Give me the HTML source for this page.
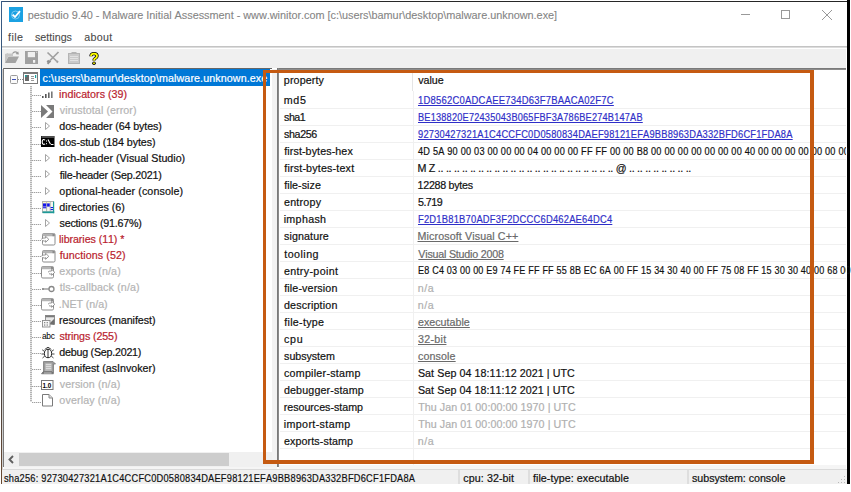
<!DOCTYPE html>
<html><head><meta charset="utf-8">
<style>
html,body{margin:0;padding:0;}
body{width:851px;height:492px;position:relative;overflow:hidden;background:#fff;font-family:"Liberation Sans",sans-serif;}
.a{position:absolute;}
.t{position:absolute;white-space:pre;line-height:normal;font-kerning:none;-webkit-text-stroke:0.2px currentColor;font-family:"Liberation Sans",sans-serif;}
svg{position:absolute;overflow:visible;}
</style></head><body>
<!-- window frame -->
<div class="a" style="left:1px;top:1px;width:847px;height:1px;background:linear-gradient(90deg,#34557e 0px,#3a4656 20px,#2a2a2a 60px,#262626 100%)"></div>
<div class="a" style="left:1px;top:1px;width:1px;height:483px;background:linear-gradient(180deg,#3a5d88 0%,#34495f 30%,#3a3f48 70%,#6a4a30 100%)"></div>
<div class="a" style="left:847px;top:0px;width:3px;height:484px;background:#000"></div>

<!-- title icon -->
<svg style="left:9px;top:7px" width="14" height="15" viewBox="0 0 14 15">
<rect x="0" y="0" width="14" height="15" fill="#1ba1e2"/>
<circle cx="6.5" cy="8" r="4" fill="none" stroke="#8fd3f5" stroke-width="0.8"/>
<path d="M3.6 7.6 L6 10 L11 4.2" fill="none" stroke="#fff" stroke-width="1.8"/>
</svg>
<!-- window controls -->
<div class="a" style="left:741px;top:14px;width:9px;height:1px;background:#999"></div>
<div class="a" style="left:781px;top:10px;width:7px;height:7px;border:1px solid #999"></div>
<svg style="left:822px;top:10px" width="10" height="10" viewBox="0 0 10 10"><path d="M0 0 L10 10 M10 0 L0 10" stroke="#999" stroke-width="1"/></svg>

<!-- menu separator + toolbar -->
<div class="a" style="left:2px;top:46px;width:845px;height:1px;background:#c4c4c4"></div>
<div class="a" style="left:2px;top:47px;width:845px;height:1px;background:#dcdcdc"></div>
<div class="a" style="left:2px;top:49px;width:844px;height:19px;background:#f0f0f0"></div>

<!-- toolbar icons -->
<svg style="left:5px;top:51px" width="14" height="12" viewBox="0 0 14 12">
<path d="M0 3 L3 2 L3 2.5 L8 2.5 L8 5 L3.5 5 L0 12 Z" fill="#c6c6c6"/>
<path d="M0 12 L3.5 5.5 L14 5.5 L10.5 12 Z" fill="#a3a3a3"/>
<path d="M7.5 2.5 Q10 -0.5 12.5 2" fill="none" stroke="#9a9a9a" stroke-width="1.1"/>
<path d="M11 2.8 L13.5 3.2 L13 0.8 Z" fill="#9a9a9a" stroke="#9a9a9a" stroke-width="0.6"/>
</svg>
<svg style="left:25px;top:51px" width="13" height="13" viewBox="0 0 13 13">
<rect x="0" y="0" width="13" height="13" fill="#a0a0a0"/>
<rect x="2.8" y="1" width="7.2" height="5.2" fill="#efefef"/>
<rect x="8" y="9" width="2.2" height="2.8" fill="#f4f4f4"/>
<rect x="11.2" y="0.8" width="1" height="1" fill="#e0e0e0"/>
</svg>
<svg style="left:46px;top:51px" width="14" height="14" viewBox="0 0 14 14">
<path d="M1.5 1.5 L10.5 10 M12.5 1 L4 9.5" stroke="#a0a0a0" stroke-width="1.7"/>
<path d="M1.5 12.8 L4.5 9.8 M1.2 11 L3 9.5" stroke="#909090" stroke-width="2"/>
<path d="M10.5 10 L12 11.5" stroke="#a0a0a0" stroke-width="2"/>
</svg>
<svg style="left:68px;top:52px" width="12" height="12" viewBox="0 0 12 12">
<rect x="0.5" y="1.5" width="11" height="10" fill="#cacaca" stroke="#b4b4b4" stroke-width="1"/>
<rect x="3.5" y="0" width="5" height="2" fill="#b4b4b4"/>
<path d="M2 4.5 H10 M2 6.5 H10 M2 8.5 H10" stroke="#e4e4e4" stroke-width="0.9"/>
</svg>
<svg style="left:89px;top:52px" width="10" height="13" viewBox="0 0 10 13">
<path d="M2 4.2 Q2 1.6 5 1.6 Q8 1.6 8 4 Q8 5.6 6 6.6 Q5 7.2 5 8.6" fill="none" stroke="#000" stroke-width="3.4"/>
<circle cx="5" cy="11.2" r="1.8" fill="#000"/>
<path d="M2 4.2 Q2 1.6 5 1.6 Q8 1.6 8 4 Q8 5.6 6 6.6 Q5 7.2 5 8.6" fill="none" stroke="#ffff00" stroke-width="1.8"/>
<circle cx="5" cy="11.2" r="0.9" fill="#ffff00"/>
</svg>

<!-- panel top lines -->
<div class="a" style="left:3px;top:68px;width:269px;height:1px;background:#666"></div>
<div class="a" style="left:277px;top:68px;width:569px;height:1px;background:#7a7a7a"></div>
<div class="a" style="left:277px;top:69px;width:569px;height:1px;background:#8c8c8c"></div>
<!-- tree panel left border -->
<div class="a" style="left:2px;top:69px;width:1px;height:415px;background:#cfcfcf"></div>
<div class="a" style="left:3px;top:68px;width:1px;height:399px;background:#7a7a7a"></div>
<!-- splitter -->
<div class="a" style="left:272px;top:69px;width:5px;height:398px;background:#f2f2f2"></div>
<!-- list left border -->
<div class="a" style="left:277px;top:68px;width:1px;height:399px;background:#7a7a7a"></div>
<div class="a" style="left:278px;top:68px;width:1px;height:399px;background:#8a8a8a"></div>

<!-- tree selection -->
<div class="a" style="left:40px;top:69px;width:230px;height:17px;background:#0078d7"></div>

<div class="a" style="left:10px;top:75px;width:6px;height:7px;border:1px solid #9a9a9a;border-radius:1.5px;background:#fafafa"></div>
<div class="a" style="left:12px;top:79px;width:4px;height:1px;background:#3c4fb8"></div>
<div class="a" style="left:18px;top:79px;width:5px;height:1px;background-image:linear-gradient(90deg,#8a8a8a 50%,transparent 50%);background-size:2px 1px"></div>
<svg style="left:23px;top:72px" width="15" height="12" viewBox="0 0 15 12">
<rect x="0.5" y="0.5" width="14" height="11" fill="#fff" stroke="#7a7a7a"/>
<rect x="0.5" y="0.5" width="14" height="1.5" fill="#7a7a7a"/>
<rect x="2" y="3" width="4" height="6" fill="#6a6a6a"/><rect x="2" y="3" width="1.5" height="2" fill="#1aa0a0"/>
<path d="M8 4.5 H11 M8 6.5 H11 M8 8.5 H11" stroke="#9a9a9a" stroke-width="1"/>
<rect x="12" y="3" width="1.2" height="3" fill="#1aa0a0"/>
</svg>
<div class="a" style="left:30px;top:86px;width:2px;height:316px;background-image:linear-gradient(180deg,#b4b4b4 50%,#e4e4e4 50%);background-size:2px 2px"></div>
<div class="a" style="left:32px;top:95px;width:9px;height:1px;background-image:linear-gradient(90deg,#a0a0a0 50%,#e0e0e0 50%);background-size:2px 1px"></div>
<div class="a" style="left:32px;top:111px;width:9px;height:1px;background-image:linear-gradient(90deg,#a0a0a0 50%,#e0e0e0 50%);background-size:2px 1px"></div>
<div class="a" style="left:32px;top:127px;width:9px;height:1px;background-image:linear-gradient(90deg,#a0a0a0 50%,#e0e0e0 50%);background-size:2px 1px"></div>
<div class="a" style="left:32px;top:144px;width:9px;height:1px;background-image:linear-gradient(90deg,#a0a0a0 50%,#e0e0e0 50%);background-size:2px 1px"></div>
<div class="a" style="left:32px;top:160px;width:9px;height:1px;background-image:linear-gradient(90deg,#a0a0a0 50%,#e0e0e0 50%);background-size:2px 1px"></div>
<div class="a" style="left:32px;top:176px;width:9px;height:1px;background-image:linear-gradient(90deg,#a0a0a0 50%,#e0e0e0 50%);background-size:2px 1px"></div>
<div class="a" style="left:32px;top:192px;width:9px;height:1px;background-image:linear-gradient(90deg,#a0a0a0 50%,#e0e0e0 50%);background-size:2px 1px"></div>
<div class="a" style="left:32px;top:208px;width:9px;height:1px;background-image:linear-gradient(90deg,#a0a0a0 50%,#e0e0e0 50%);background-size:2px 1px"></div>
<div class="a" style="left:32px;top:224px;width:9px;height:1px;background-image:linear-gradient(90deg,#a0a0a0 50%,#e0e0e0 50%);background-size:2px 1px"></div>
<div class="a" style="left:32px;top:240px;width:9px;height:1px;background-image:linear-gradient(90deg,#a0a0a0 50%,#e0e0e0 50%);background-size:2px 1px"></div>
<div class="a" style="left:32px;top:256px;width:9px;height:1px;background-image:linear-gradient(90deg,#a0a0a0 50%,#e0e0e0 50%);background-size:2px 1px"></div>
<div class="a" style="left:32px;top:273px;width:9px;height:1px;background-image:linear-gradient(90deg,#a0a0a0 50%,#e0e0e0 50%);background-size:2px 1px"></div>
<div class="a" style="left:32px;top:289px;width:9px;height:1px;background-image:linear-gradient(90deg,#a0a0a0 50%,#e0e0e0 50%);background-size:2px 1px"></div>
<div class="a" style="left:32px;top:305px;width:9px;height:1px;background-image:linear-gradient(90deg,#a0a0a0 50%,#e0e0e0 50%);background-size:2px 1px"></div>
<div class="a" style="left:32px;top:321px;width:9px;height:1px;background-image:linear-gradient(90deg,#a0a0a0 50%,#e0e0e0 50%);background-size:2px 1px"></div>
<div class="a" style="left:32px;top:337px;width:9px;height:1px;background-image:linear-gradient(90deg,#a0a0a0 50%,#e0e0e0 50%);background-size:2px 1px"></div>
<div class="a" style="left:32px;top:353px;width:9px;height:1px;background-image:linear-gradient(90deg,#a0a0a0 50%,#e0e0e0 50%);background-size:2px 1px"></div>
<div class="a" style="left:32px;top:369px;width:9px;height:1px;background-image:linear-gradient(90deg,#a0a0a0 50%,#e0e0e0 50%);background-size:2px 1px"></div>
<div class="a" style="left:32px;top:386px;width:9px;height:1px;background-image:linear-gradient(90deg,#a0a0a0 50%,#e0e0e0 50%);background-size:2px 1px"></div>
<div class="a" style="left:32px;top:402px;width:9px;height:1px;background-image:linear-gradient(90deg,#a0a0a0 50%,#e0e0e0 50%);background-size:2px 1px"></div>
<svg style="left:41px;top:85.7px" width="14" height="13" viewBox="0 0 14 13"><rect x="1" y="10" width="1.6" height="2" fill="#555"/><rect x="4" y="8" width="1.6" height="4" fill="#555"/><rect x="7" y="6.5" width="1.6" height="5.5" fill="#666"/><rect x="10" y="5.5" width="1.6" height="6.5" fill="#777"/></svg>
<svg style="left:41px;top:105.3px" width="13" height="13" viewBox="0 0 13 13"><path d="M0 0 L7 6.5 L0 13 Z" fill="#7a7a7a"/><path d="M5 0 H13 V13 H5 L11.5 6.5 Z" fill="#7a7a7a"/></svg>
<svg style="left:41px;top:121.0px" width="12" height="10" viewBox="0 0 12 10"><path d="M4.5 1.5 L8.5 5 L4.5 8.5 Z" fill="#fff" stroke="#9a9a9a" stroke-width="0.9"/></svg>
<svg style="left:41px;top:153.2px" width="12" height="10" viewBox="0 0 12 10"><path d="M4.5 1.5 L8.5 5 L4.5 8.5 Z" fill="#fff" stroke="#9a9a9a" stroke-width="0.9"/></svg>
<svg style="left:41px;top:169.3px" width="12" height="10" viewBox="0 0 12 10"><path d="M4.5 1.5 L8.5 5 L4.5 8.5 Z" fill="#fff" stroke="#9a9a9a" stroke-width="0.9"/></svg>
<svg style="left:41px;top:185.5px" width="12" height="10" viewBox="0 0 12 10"><path d="M4.5 1.5 L8.5 5 L4.5 8.5 Z" fill="#fff" stroke="#9a9a9a" stroke-width="0.9"/></svg>
<svg style="left:41px;top:217.7px" width="12" height="10" viewBox="0 0 12 10"><path d="M4.5 1.5 L8.5 5 L4.5 8.5 Z" fill="#fff" stroke="#9a9a9a" stroke-width="0.9"/></svg>
<svg style="left:41px;top:135.8px" width="14" height="11" viewBox="0 0 14 11"><rect x="0" y="0" width="13.5" height="11" fill="#000"/><rect x="0.5" y="0.5" width="12.5" height="1" fill="#9a9a9a"/><path d="M4 4.2 Q3.2 3.4 2.3 3.6 Q1.2 4 1.2 6 Q1.2 8 2.3 8.3 Q3.3 8.5 4 7.8" fill="none" stroke="#fff" stroke-width="1.1"/><rect x="5" y="4.5" width="1" height="1" fill="#fff"/><rect x="5" y="7.2" width="1" height="1" fill="#fff"/><path d="M7 3.5 L9.5 8.3" stroke="#fff" stroke-width="1.1"/><path d="M10 8.5 H12.5" stroke="#fff" stroke-width="1"/></svg>
<svg style="left:42px;top:201.0px" width="13" height="13" viewBox="0 0 13 13"><rect x="0" y="0" width="12" height="12" fill="#b0b0b0"/><rect x="1" y="1" width="10" height="9.5" fill="#f6f6f0"/><rect x="4.2" y="1" width="0.9" height="9.5" fill="#a8a8a8"/><rect x="7.7" y="1" width="0.9" height="9.5" fill="#a8a8a8"/><rect x="1" y="1" width="3.2" height="1" fill="#fff8c0"/><rect x="5.1" y="1" width="2.6" height="1" fill="#fff8c0"/><rect x="1" y="2.4" width="3.2" height="3.2" fill="#1414e6"/><rect x="5.1" y="2.4" width="2.6" height="3.2" fill="#1414e6"/><rect x="1" y="6.2" width="3.2" height="1.1" fill="#1414e6"/><rect x="8.6" y="6" width="2.4" height="1.1" fill="#1414e6"/><rect x="8.6" y="8" width="2.4" height="1.1" fill="#1414e6"/><rect x="11" y="0.6" width="1.2" height="11.6" fill="#1e9a98"/><rect x="0.6" y="10.4" width="11.6" height="1.8" fill="#1e9a98"/></svg>
<svg style="left:41px;top:233.4px" width="15" height="13" viewBox="0 0 15 13"><rect x="1.5" y="0.5" width="12.5" height="11.5" rx="1.3" fill="#fff" stroke="#8c8c8c"/><rect x="1.5" y="0.5" width="12.5" height="2.8" rx="1" fill="#b4b4b4"/><rect x="11.5" y="1" width="2.2" height="2.2" fill="#8a8a8a"/><path d="M0.3 6.2 Q1.8 4.6 4 5 L4.6 5 L4.6 3.3 L7.8 6.3 L4.6 9.3 L4.6 7.6 Q3.2 8.8 2 7.6" fill="#fff" stroke="#8a8a8a" stroke-width="0.9"/></svg>
<svg style="left:41px;top:249.5px" width="15" height="13" viewBox="0 0 15 13"><rect x="1.5" y="0.5" width="12.5" height="11.5" rx="1.3" fill="#fff" stroke="#8c8c8c"/><rect x="1.5" y="0.5" width="12.5" height="2.8" rx="1" fill="#b4b4b4"/><rect x="11.5" y="1" width="2.2" height="2.2" fill="#8a8a8a"/><path d="M0.3 6.2 Q1.8 4.6 4 5 L4.6 5 L4.6 3.3 L7.8 6.3 L4.6 9.3 L4.6 7.6 Q3.2 8.8 2 7.6" fill="#fff" stroke="#8a8a8a" stroke-width="0.9"/></svg>
<svg style="left:41px;top:265.6px" width="15" height="13" viewBox="0 0 15 13"><rect x="0.5" y="0.5" width="12" height="11.5" rx="1.3" fill="#fff" stroke="#8c8c8c"/><rect x="0.5" y="0.5" width="12" height="2.8" rx="1" fill="#b4b4b4"/><rect x="10" y="1" width="2.2" height="2.2" fill="#8a8a8a"/><path d="M7 6.2 Q8.2 4.8 10 5 L10.6 5 L10.6 3.3 L13.8 6.3 L10.6 9.3 L10.6 7.6 Q9.2 8.8 8 7.6" fill="#fff" stroke="#8a8a8a" stroke-width="0.9"/></svg>
<svg style="left:41px;top:297.9px" width="15" height="13" viewBox="0 0 15 13"><rect x="0.5" y="0.5" width="12" height="11.5" rx="1.3" fill="#fff" stroke="#8c8c8c"/><rect x="0.5" y="0.5" width="12" height="2.8" rx="1" fill="#b4b4b4"/><rect x="10" y="1" width="2.2" height="2.2" fill="#8a8a8a"/><path d="M7 6.2 Q8.2 4.8 10 5 L10.6 5 L10.6 3.3 L13.8 6.3 L10.6 9.3 L10.6 7.6 Q9.2 8.8 8 7.6" fill="#fff" stroke="#8a8a8a" stroke-width="0.9"/></svg>
<svg style="left:41px;top:282.8px" width="14" height="12" viewBox="0 0 14 12"><path d="M1 6 H8" stroke="#888" stroke-width="1.2"/><circle cx="2" cy="6" r="1" fill="#888"/><circle cx="10.5" cy="6" r="2.5" fill="none" stroke="#888" stroke-width="1.3"/></svg>
<svg style="left:41.5px;top:315.0px" width="14" height="13" viewBox="0 0 14 13"><rect x="3.5" y="0.5" width="9" height="8.5" fill="#e8e8e8" stroke="#8a8a8a" stroke-width="0.9"/><rect x="3.5" y="0.5" width="9" height="1.8" fill="#7a7a7a"/><path d="M7 9 L12.5 3.5 L12.5 10 Z" fill="#6e6e6e"/><rect x="0.5" y="5.5" width="7.5" height="6.5" fill="#f8f8f8" stroke="#8a8a8a" stroke-width="0.9"/><rect x="2" y="7" width="1.3" height="1.3" fill="#8a8a8a"/><rect x="4.6" y="7" width="1.3" height="1.3" fill="#8a8a8a"/><rect x="2" y="9.4" width="1.3" height="1.3" fill="#8a8a8a"/><rect x="4.6" y="9.4" width="1.3" height="1.3" fill="#8a8a8a"/></svg>
<svg style="left:41.6px;top:329.3px" width="16" height="12" viewBox="0 0 16 12"><text x="0" y="9.5" font-size="8.4" fill="#000" font-family="Liberation Sans" letter-spacing="-0.3" style="-webkit-text-stroke:0.25px #000">abc</text></svg>
<svg style="left:41px;top:345.3px" width="14" height="14" viewBox="0 0 14 14"><path d="M4 4.5 Q7 0.5 10 4.5" fill="#fff" stroke="#222" stroke-width="1"/><ellipse cx="7" cy="8.5" rx="3.6" ry="4.2" fill="#fff" stroke="#222" stroke-width="1"/><path d="M7 4.5 V12.8" stroke="#222" stroke-width="0.9"/><path d="M3.6 6.5 L1.2 4.8 M10.4 6.5 L12.8 4.8 M3.4 9 L0.5 9 M10.6 9 L13.5 9 M3.8 11 L1.5 13 M10.2 11 L12.5 13" stroke="#333" stroke-width="0.9"/></svg>
<svg style="left:40.5px;top:360.9px" width="15" height="14" viewBox="0 0 15 14"><path d="M2.5 0.5 H12 L14.5 3 H12.5 V12 H2.5 Z" fill="#9a9a9a" stroke="#7a7a7a" stroke-width="0.8"/><rect x="4.2" y="2.2" width="6.6" height="7.8" fill="#b8b8b8"/><path d="M4.8 3.6 H10.2 M4.8 5.6 H10.2 M4.8 7.6 H10.2" stroke="#e4e4e4" stroke-width="0.9"/><path d="M0.5 12.8 L2 10.8 H11 L12.5 12.8 Z" fill="#7a7a7a" stroke="#6a6a6a" stroke-width="0.7"/><rect x="3" y="11.6" width="7.5" height="0.8" fill="#d8d8d8"/></svg>
<svg style="left:40.5px;top:379.6px" width="13" height="11" viewBox="0 0 13 11"><rect x="0.5" y="0.5" width="11.5" height="9" fill="#fff" stroke="#777"/><text x="1.6" y="7.9" font-size="6.3" font-weight="bold" fill="#000" font-family="Liberation Sans" style="-webkit-text-stroke:0">1.0</text></svg>
<svg style="left:42px;top:394.4px" width="12" height="13" viewBox="0 0 12 13"><path d="M0.5 0.5 H7 L10.5 4 V12 H0.5 Z" fill="#fff" stroke="#7a7a7a"/><path d="M7 0.5 V4 H10.5" fill="#ddd" stroke="#8a8a8a"/></svg>

<!-- tree h scrollbar -->
<div class="a" style="left:4px;top:452px;width:268px;height:15px;background:#f0f0f0"></div>
<div class="a" style="left:19px;top:453px;width:210px;height:13px;background:#cdcdcd"></div>
<svg style="left:8px;top:455px" width="6" height="9" viewBox="0 0 6 9"><path d="M5 1 L1.5 4.5 L5 8" fill="none" stroke="#606060" stroke-width="1.9"/></svg>

<div class="a" style="left:280px;top:108px;width:566px;height:1px;background:#f0f0f0"></div>
<div class="a" style="left:280px;top:125px;width:566px;height:1px;background:#f0f0f0"></div>
<div class="a" style="left:280px;top:142px;width:566px;height:1px;background:#f0f0f0"></div>
<div class="a" style="left:280px;top:159px;width:566px;height:1px;background:#f0f0f0"></div>
<div class="a" style="left:280px;top:176px;width:566px;height:1px;background:#f0f0f0"></div>
<div class="a" style="left:280px;top:193px;width:566px;height:1px;background:#f0f0f0"></div>
<div class="a" style="left:280px;top:210px;width:566px;height:1px;background:#f0f0f0"></div>
<div class="a" style="left:280px;top:227px;width:566px;height:1px;background:#f0f0f0"></div>
<div class="a" style="left:280px;top:244px;width:566px;height:1px;background:#f0f0f0"></div>
<div class="a" style="left:280px;top:261px;width:566px;height:1px;background:#f0f0f0"></div>
<div class="a" style="left:280px;top:278px;width:566px;height:1px;background:#f0f0f0"></div>
<div class="a" style="left:280px;top:295px;width:566px;height:1px;background:#f0f0f0"></div>
<div class="a" style="left:280px;top:312px;width:566px;height:1px;background:#f0f0f0"></div>
<div class="a" style="left:280px;top:329px;width:566px;height:1px;background:#f0f0f0"></div>
<div class="a" style="left:280px;top:346px;width:566px;height:1px;background:#f0f0f0"></div>
<div class="a" style="left:280px;top:363px;width:566px;height:1px;background:#f0f0f0"></div>
<div class="a" style="left:280px;top:380px;width:566px;height:1px;background:#f0f0f0"></div>
<div class="a" style="left:280px;top:397px;width:566px;height:1px;background:#f0f0f0"></div>
<div class="a" style="left:280px;top:414px;width:566px;height:1px;background:#f0f0f0"></div>
<div class="a" style="left:280px;top:431px;width:566px;height:1px;background:#f0f0f0"></div>
<div class="a" style="left:280px;top:448px;width:566px;height:1px;background:#f0f0f0"></div>
<div class="a" style="left:412px;top:73px;width:1px;height:18px;background:#e5e5e5"></div>
<div class="a" style="left:413px;top:91px;width:1px;height:376px;background:#f0f0f0"></div>

<!-- list bottom band -->
<div class="a" style="left:279px;top:465px;width:567px;height:4px;background:#f5f5f5"></div>
<div class="a" style="left:4px;top:467px;width:273px;height:2px;background:#f5f5f5"></div>

<!-- status bar -->
<div class="a" style="left:2px;top:469px;width:845px;height:1px;background:#dadada"></div>
<div class="a" style="left:2px;top:470px;width:845px;height:14px;background:#f0f0f0"></div>
<div class="a" style="left:458px;top:470px;width:2px;height:14px;background:#dedede"></div>
<div class="a" style="left:528px;top:470px;width:2px;height:14px;background:#dedede"></div>
<div class="a" style="left:687px;top:470px;width:2px;height:14px;background:#dedede"></div>
<svg style="left:838px;top:476px" width="8" height="8" viewBox="0 0 8 8" fill="#b8b8b8">
<rect x="6" y="0" width="1" height="1"/><rect x="3" y="3" width="1" height="1"/><rect x="6" y="3" width="1" height="1"/>
<rect x="0" y="6" width="1" height="1"/><rect x="3" y="6" width="1" height="1"/><rect x="6" y="6" width="1" height="1"/>
</svg>

<div class="t" style="left:27.70px;top:8.77px;font-size:10.9px;color:#858585;letter-spacing:-0.025px;-webkit-text-stroke:0.1px currentColor;">pestudio 9.40 - Malware Initial Assessment - www.winitor.com [c:\users\bamur\desktop\malware.unknown.exe]</div>
<div class="t" style="left:8.05px;top:31.26px;font-size:10.7px;color:#4a4a4a;letter-spacing:0.450px;-webkit-text-stroke:0.1px currentColor;">file</div>
<div class="t" style="left:35.00px;top:31.26px;font-size:10.7px;color:#4a4a4a;letter-spacing:0.016px;-webkit-text-stroke:0.1px currentColor;">settings</div>
<div class="t" style="left:84.15px;top:31.26px;font-size:10.7px;color:#4a4a4a;letter-spacing:0.314px;-webkit-text-stroke:0.1px currentColor;">about</div>
<div class="t" style="left:42.55px;top:71.76px;font-size:10.7px;color:#fff;letter-spacing:0.104px;">c:\users\bamur\desktop\malware.unknown.exe</div>
<div class="t" style="left:59.08px;top:87.89px;font-size:10.7px;color:#b91d2e;letter-spacing:0.020px;">indicators (39)</div>
<div class="t" style="left:59.76px;top:104.02px;font-size:10.7px;color:#b4b4b4;letter-spacing:0.082px;">virustotal (error)</div>
<div class="t" style="left:59.35px;top:120.15px;font-size:10.7px;color:#111;letter-spacing:-0.103px;">dos-header (64 bytes)</div>
<div class="t" style="left:59.35px;top:136.28px;font-size:10.7px;color:#111;letter-spacing:-0.064px;">dos-stub (184 bytes)</div>
<div class="t" style="left:59.09px;top:152.41px;font-size:10.7px;color:#111;letter-spacing:-0.019px;">rich-header (Visual Studio)</div>
<div class="t" style="left:59.65px;top:168.54px;font-size:10.7px;color:#111;letter-spacing:-0.198px;">file-header (Sep.2021)</div>
<div class="t" style="left:59.35px;top:184.67px;font-size:10.7px;color:#111;letter-spacing:0.103px;">optional-header (console)</div>
<div class="t" style="left:59.35px;top:200.80px;font-size:10.7px;color:#111;letter-spacing:0.015px;">directories (6)</div>
<div class="t" style="left:59.50px;top:216.93px;font-size:10.7px;color:#111;letter-spacing:-0.199px;">sections (91.67%)</div>
<div class="t" style="left:59.08px;top:233.06px;font-size:10.7px;color:#b91d2e;letter-spacing:-0.081px;">libraries (11) *</div>
<div class="t" style="left:59.65px;top:249.19px;font-size:10.7px;color:#b91d2e;letter-spacing:0.091px;">functions (52)</div>
<div class="t" style="left:59.35px;top:265.32px;font-size:10.7px;color:#b4b4b4;letter-spacing:0.113px;">exports (n/a)</div>
<div class="t" style="left:59.64px;top:281.45px;font-size:10.7px;color:#b4b4b4;letter-spacing:0.131px;">tls-callback (n/a)</div>
<div class="t" style="left:58.82px;top:297.58px;font-size:10.7px;color:#b4b4b4;letter-spacing:-0.056px;">.NET (n/a)</div>
<div class="t" style="left:59.09px;top:313.71px;font-size:10.7px;color:#111;letter-spacing:-0.050px;">resources (manifest)</div>
<div class="t" style="left:59.50px;top:329.84px;font-size:10.7px;color:#b91d2e;letter-spacing:-0.117px;">strings (255)</div>
<div class="t" style="left:59.35px;top:345.97px;font-size:10.7px;color:#111;letter-spacing:-0.237px;">debug (Sep.2021)</div>
<div class="t" style="left:59.09px;top:362.10px;font-size:10.7px;color:#111;letter-spacing:-0.019px;">manifest (asInvoker)</div>
<div class="t" style="left:59.76px;top:378.23px;font-size:10.7px;color:#b4b4b4;letter-spacing:0.094px;">version (n/a)</div>
<div class="t" style="left:59.35px;top:394.36px;font-size:10.7px;color:#b4b4b4;letter-spacing:0.129px;">overlay (n/a)</div>
<div class="t" style="left:283.81px;top:74.26px;font-size:10.7px;color:#111;letter-spacing:0.137px;">property</div>
<div class="t" style="left:418.16px;top:74.26px;font-size:10.7px;color:#111;letter-spacing:0.000px;">value</div>
<div class="t" style="left:283.69px;top:94.16px;font-size:10.7px;color:#111;letter-spacing:0.673px;">md5</div>
<div class="t" style="left:417.68px;top:93.97px;font-size:10.9px;color:#2f2fc8;letter-spacing:0.250px;transform:scaleX(0.8691);transform-origin:0 0;text-decoration:underline;text-underline-offset:1px;">1D8562C0ADCAEE734D63F7BAACA02F7C</div>
<div class="t" style="left:284.10px;top:111.20px;font-size:10.7px;color:#111;letter-spacing:-0.561px;">sha1</div>
<div class="t" style="left:417.65px;top:111.01px;font-size:10.9px;color:#2f2fc8;letter-spacing:0.250px;transform:scaleX(0.8426);transform-origin:0 0;text-decoration:underline;text-underline-offset:1px;">BE138820E72435043B065FBF3A786BE274B147AB</div>
<div class="t" style="left:284.10px;top:128.24px;font-size:10.7px;color:#111;letter-spacing:-0.387px;">sha256</div>
<div class="t" style="left:417.96px;top:128.05px;font-size:10.9px;color:#2f2fc8;letter-spacing:0.250px;transform:scaleX(0.8543);transform-origin:0 0;text-decoration:underline;text-underline-offset:1px;">92730427321A1C4CCFC0D0580834DAEF98121EFA9BB8963DA332BFD6CF1FDA8A</div>
<div class="t" style="left:284.25px;top:145.28px;font-size:10.7px;color:#111;letter-spacing:0.098px;">first-bytes-hex</div>
<div class="t" style="left:418.19px;top:145.09px;font-size:10.9px;color:#111;letter-spacing:0.250px;transform:scaleX(0.8422);transform-origin:0 0;">4D 5A 90 00 03 00 00 00 04 00 00 00 FF FF 00 00 B8 00 00 00 00 00 00 00 40 00 00 00 00 00 00 00 00 00</div>
<div class="t" style="left:284.25px;top:162.32px;font-size:10.7px;color:#111;letter-spacing:0.183px;">first-bytes-text</div>
<div class="t" style="left:417.52px;top:162.32px;font-size:10.7px;color:#111;letter-spacing:-0.273px;">M Z .. .. .. .. .. .. .. .. .. .. .. .. .. .. .. .. .. .. .. .. .. .. @ .. .. .. .. .. .. .. ..</div>
<div class="t" style="left:284.25px;top:179.36px;font-size:10.7px;color:#111;letter-spacing:0.045px;">file-size</div>
<div class="t" style="left:417.58px;top:179.36px;font-size:10.7px;color:#111;letter-spacing:-0.280px;">12288 bytes</div>
<div class="t" style="left:283.95px;top:196.40px;font-size:10.7px;color:#111;letter-spacing:0.248px;">entropy</div>
<div class="t" style="left:417.97px;top:196.40px;font-size:10.7px;color:#111;letter-spacing:-0.510px;">5.719</div>
<div class="t" style="left:283.68px;top:213.44px;font-size:10.7px;color:#111;letter-spacing:0.328px;">imphash</div>
<div class="t" style="left:417.63px;top:213.25px;font-size:10.9px;color:#2f2fc8;letter-spacing:0.250px;transform:scaleX(0.8601);transform-origin:0 0;text-decoration:underline;text-underline-offset:1px;">F2D1B81B70ADF3F2DCCC6D462AE64DC4</div>
<div class="t" style="left:284.10px;top:230.48px;font-size:10.7px;color:#111;letter-spacing:0.094px;">signature</div>
<div class="t" style="left:417.52px;top:230.48px;font-size:10.7px;color:#6a6a6a;letter-spacing:0.115px;text-decoration:underline;text-underline-offset:1px;">Microsoft Visual C++</div>
<div class="t" style="left:284.24px;top:247.52px;font-size:10.7px;color:#111;letter-spacing:0.470px;">tooling</div>
<div class="t" style="left:418.35px;top:247.52px;font-size:10.7px;color:#6a6a6a;letter-spacing:-0.213px;text-decoration:underline;text-underline-offset:1px;">Visual Studio 2008</div>
<div class="t" style="left:283.95px;top:264.56px;font-size:10.7px;color:#111;letter-spacing:0.348px;">entry-point</div>
<div class="t" style="left:417.66px;top:264.37px;font-size:10.9px;color:#111;letter-spacing:0.250px;transform:scaleX(0.8281);transform-origin:0 0;">E8 C4 03 00 00 E9 74 FE FF FF 55 8B EC 6A 00 FF 15 34 30 40 00 FF 75 08 FF 15 30 30 40 00 68 00 00</div>
<div class="t" style="left:284.25px;top:281.60px;font-size:10.7px;color:#111;letter-spacing:0.128px;">file-version</div>
<div class="t" style="left:417.69px;top:281.60px;font-size:10.7px;color:#b0b0b0;letter-spacing:0.568px;">n/a</div>
<div class="t" style="left:283.95px;top:298.64px;font-size:10.7px;color:#111;letter-spacing:0.170px;">description</div>
<div class="t" style="left:417.69px;top:298.64px;font-size:10.7px;color:#b0b0b0;letter-spacing:0.568px;">n/a</div>
<div class="t" style="left:284.25px;top:315.68px;font-size:10.7px;color:#111;letter-spacing:0.295px;">file-type</div>
<div class="t" style="left:417.95px;top:315.68px;font-size:10.7px;color:#6a6a6a;letter-spacing:0.019px;text-decoration:underline;text-underline-offset:1px;">executable</div>
<div class="t" style="left:283.95px;top:332.72px;font-size:10.7px;color:#111;letter-spacing:0.707px;">cpu</div>
<div class="t" style="left:417.99px;top:332.72px;font-size:10.7px;color:#6a6a6a;letter-spacing:0.284px;text-decoration:underline;text-underline-offset:1px;">32-bit</div>
<div class="t" style="left:284.10px;top:349.76px;font-size:10.7px;color:#111;letter-spacing:-0.042px;">subsystem</div>
<div class="t" style="left:417.95px;top:349.76px;font-size:10.7px;color:#6a6a6a;letter-spacing:0.125px;text-decoration:underline;text-underline-offset:1px;">console</div>
<div class="t" style="left:283.95px;top:366.80px;font-size:10.7px;color:#111;letter-spacing:0.259px;">compiler-stamp</div>
<div class="t" style="left:417.91px;top:366.80px;font-size:10.7px;color:#111;letter-spacing:0.070px;">Sat Sep 04 18:11:12 2021 | UTC</div>
<div class="t" style="left:283.95px;top:383.84px;font-size:10.7px;color:#111;letter-spacing:0.145px;">debugger-stamp</div>
<div class="t" style="left:417.91px;top:383.84px;font-size:10.7px;color:#111;letter-spacing:0.070px;">Sat Sep 04 18:11:12 2021 | UTC</div>
<div class="t" style="left:283.69px;top:400.88px;font-size:10.7px;color:#111;letter-spacing:-0.023px;">resources-stamp</div>
<div class="t" style="left:418.16px;top:400.88px;font-size:10.7px;color:#b0b0b0;letter-spacing:0.069px;">Thu Jan 01 00:00:00 1970 | UTC</div>
<div class="t" style="left:283.68px;top:417.92px;font-size:10.7px;color:#111;letter-spacing:0.385px;">import-stamp</div>
<div class="t" style="left:418.16px;top:417.92px;font-size:10.7px;color:#b0b0b0;letter-spacing:0.069px;">Thu Jan 01 00:00:00 1970 | UTC</div>
<div class="t" style="left:283.95px;top:434.96px;font-size:10.7px;color:#111;letter-spacing:0.118px;">exports-stamp</div>
<div class="t" style="left:417.69px;top:434.96px;font-size:10.7px;color:#b0b0b0;letter-spacing:0.568px;">n/a</div>
<div class="t" style="left:3.94px;top:472.27px;font-size:10.9px;color:#111;letter-spacing:0.250px;transform:scaleX(0.8526);transform-origin:0 0;">sha256: 92730427321A1C4CCFC0D0580834DAEF98121EFA9BB8963DA332BFD6CF1FDA8A</div>
<div class="t" style="left:463.35px;top:472.46px;font-size:10.7px;color:#111;letter-spacing:0.077px;">cpu: 32-bit</div>
<div class="t" style="left:532.95px;top:472.46px;font-size:10.7px;color:#111;letter-spacing:0.048px;">file-type: executable</div>
<div class="t" style="left:692.00px;top:472.46px;font-size:10.7px;color:#111;letter-spacing:-0.029px;">subsystem: console</div>

<div class="a" style="left:846px;top:69px;width:1px;height:398px;background:#fff"></div>
<!-- orange highlight box -->
<div class="a" style="left:263px;top:70px;width:544px;height:387px;border-style:solid;border-color:#c55a11;border-width:3px 4px 4px 3px;"></div>
</body></html>
